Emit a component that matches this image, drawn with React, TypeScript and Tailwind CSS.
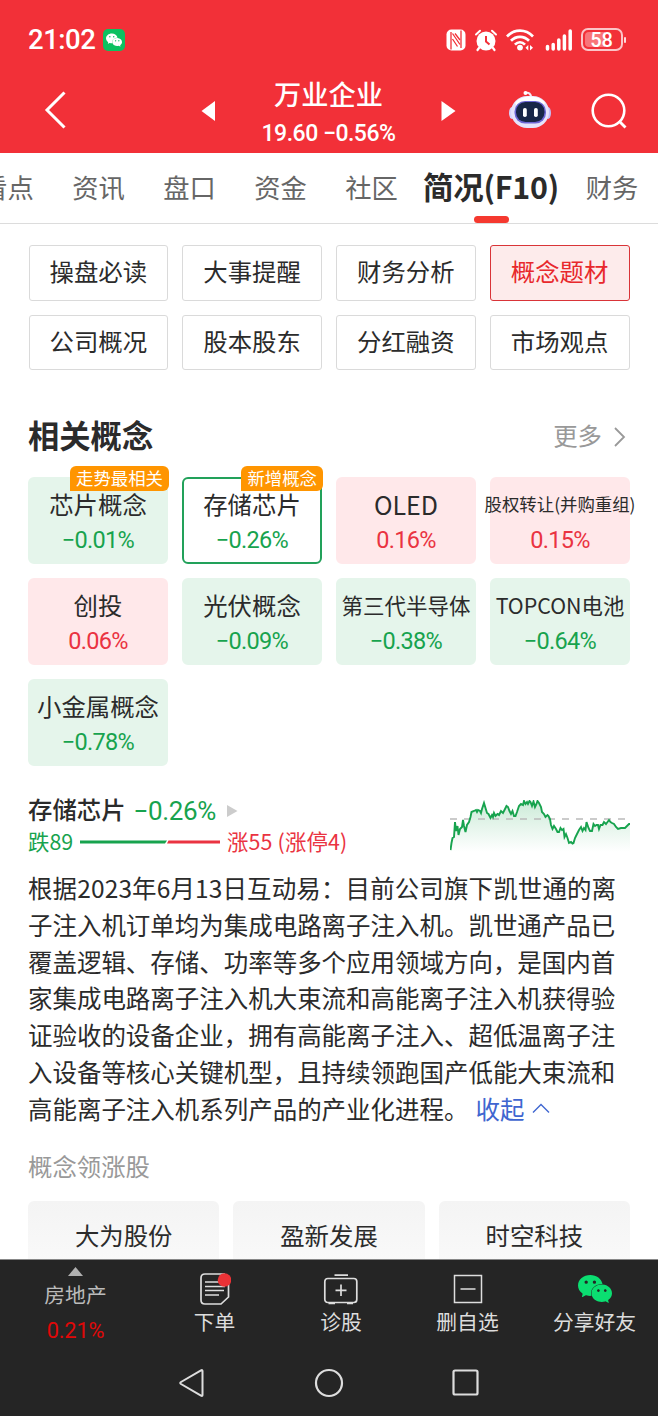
import React from "react";
import { SiWechat } from "react-icons/si";

const tabs = ["看点", "资讯", "盘口", "资金", "社区", "简况(F10)", "财务"];

const sections = [
  "操盘必读", "大事提醒", "财务分析", "概念题材",
  "公司概况", "股本股东", "分红融资", "市场观点",
];

type Concept = { name: string; change: string; up?: boolean; size?: string; badge?: string; selected?: boolean };

const concepts: Concept[] = [
  { name: "芯片概念", change: "−0.01%", badge: "走势最相关" },
  { name: "存储芯片", change: "−0.26%", badge: "新增概念", selected: true },
  { name: "OLED", change: "0.16%", up: true, size: "text-[25px]" },
  { name: "股权转让(并购重组)", change: "0.15%", up: true, size: "text-[17.4px]" },
  { name: "创投", change: "0.06%", up: true },
  { name: "光伏概念", change: "−0.09%" },
  { name: "第三代半导体", change: "−0.38%", size: "text-[21.5px]" },
  { name: "TOPCON电池", change: "−0.64%", size: "text-[21.4px]" },
  { name: "小金属概念", change: "−0.78%" },
];

const firstLine = "根据2023年6月13日互动易：目前公司旗下凯世通的离";

const paragraph = [
  "子注入机订单均为集成电路离子注入机。凯世通产品已",
  "覆盖逻辑、存储、功率等多个应用领域方向，是国内首",
  "家集成电路离子注入机大束流和高能离子注入机获得验",
  "证验收的设备企业，拥有高能离子注入、超低温离子注",
  "入设备等核心关键机型，且持续领跑国产低能大束流和",
];

const linePoints =
  "0.5,50 1.5,43 2.5,38 4,37 5,22 6,31 7.5,26 8.5,35 10,29 12,27 13,20 14,26 15.5,32 17,25 19,22 20.5,17 21.5,12 24,11 26,10 27,12 28,10 30,11 31,13 32,9 34,3 35.5,8 37,13 38.5,14 40.5,18 42,15 43,17 44,13 45.5,16 47.5,14 49,15 51,11 53,13 55,9 56.5,6 58,7 59.5,11 61,14 62.5,11 64,16 65.5,16 67,12 69,6 71,4 73,5 74,1 75.5,4 77,2 78,4 79.5,1 80.5,2 82,6 83.5,1.5 85,7 86.5,4 87.5,1 89,3 91,7 92,12 94,14 95.5,17 97.5,15 98.5,16 100,19 101,25 102.5,29 104,26 106,29 107.5,32 109,32 110.5,28 112,30 113.5,29 114.5,37 116,34 117.5,38 119,43 121,42 122.5,43.5 123.5,43 125,38 127,34 129,30 131,27 132.5,31 134,28 135.5,30 136.5,22 138.5,28 140,31 142,31 143.5,24 145,26 146.5,25 148,25 149,29 150.5,25 152.5,25 154,22 156,24 157.5,22 159,20 160.5,22 162,23 164,24 166,27 168,29 171,28 175,28 177,26 179,24 180,24";

function StatusBar() {
  return (
    <div className="flex h-[76px] items-center pt-[3px] pl-[28px] pr-[32px] text-white">
      <span className="w-[75px] font-['Roboto'] text-[27.5px] font-medium tracking-[-0.5px] whitespace-nowrap">21:02</span>
      <span className="flex h-[22px] w-[22px] items-center justify-center rounded-[5px] bg-[#0cc160]">
        <SiWechat size={16} />
      </span>
      <div className="ml-auto flex items-center">
        <svg width="20" height="22" viewBox="0 0 20 22">
          <rect x="0.5" y="0.5" width="19" height="21" rx="5" fill="#fff" />
          <path d="M5 3V20.500M15 1.500V19" stroke="#f23038" strokeWidth="1.300" fill="none" />
          <path d="M6.500 4.500L14 15.500M6.500 10L11.500 17.500M9 4.500L14 11" stroke="#f23038" strokeWidth="1.300" fill="none" />
        </svg>
        <svg className="ml-[8px]" width="24" height="24" viewBox="0 0 24 24">
          <circle cx="12" cy="13" r="9.5" fill="#fff" />
          <path d="M2 6.5L6 2.8M22 6.5L18 2.8" stroke="#fff" strokeWidth="2" strokeLinecap="round" />
          <path d="M5 20L3.5 22M19 20L20.5 22" stroke="#fff" strokeWidth="2.2" strokeLinecap="round" />
          <path d="M12 8V13.5L15.500 16.500" stroke="#f23038" strokeWidth="2" fill="none" />
        </svg>
        <svg className="ml-[8px]" width="28" height="24" viewBox="0 0 28 24">
          <g fill="none" stroke="#fff" strokeWidth="2.7">
            <path d="M1 8.5C8.5 0.7 19.500 0.7 27 8.5" />
            <path d="M5 12.800C10 7.500 18 7.500 23 12.800" />
            <path d="M8.900 16.600C12 13.600 16 13.600 19 16.600" />
          </g>
          <circle cx="14" cy="19.600" r="2.900" fill="#fff" />
          <path d="M22.300 17V22.500L19.500 19.700ZM24 17V22.500L27 19.700Z" fill="#fff" />
        </svg>
        <svg className="ml-[11px]" width="28" height="22" viewBox="0 0 28 22">
          <path d="M2.500 17.500V20M8.200 15.500V20M13.800 11V20M19.400 7V20M25.200 2V20" stroke="#fff" strokeWidth="3.500" strokeLinecap="round" />
        </svg>
        <div className="ml-[8px] flex h-[23px] w-[42px] items-center rounded-[7px] border-2 border-[#fbc5c8] p-[2px]">
          <div className="flex h-full w-full items-center justify-center rounded-[4px] bg-[linear-gradient(90deg,#f8757a_58%,#f23038_58%)] font-['Roboto'] text-[20px] font-medium leading-none">
            58
          </div>
        </div>
        <span className="ml-[1.500px] h-[6px] w-[2px] rounded-full bg-[#ffd9da]" />
      </div>
    </div>
  );
}

function Robot() {
  return (
    <svg width="44" height="42" viewBox="0 0 44 42">
      <path d="M23 9C23.500 5 20.500 3 17.500 4" stroke="#f5e8f5" strokeWidth="2" fill="none" />
      <circle cx="17.500" cy="4" r="2" fill="#fff" />
      <ellipse cx="4" cy="24" rx="3" ry="6" fill="#d5d3fa" />
      <ellipse cx="40" cy="24" rx="3" ry="6" fill="#c3bff8" />
      <rect x="3" y="7" width="38" height="32" rx="16" fill="#e5e3fb" />
      <path d="M7 14C12 6 31 5 37 14L35 17H9Z" fill="#fff" />
      <rect x="6.500" y="12" width="31.500" height="22.500" rx="10.500" fill="#6c66d4" />
      <rect x="8" y="13" width="28.500" height="20" rx="9.500" fill="#182647" />
      <rect x="15" y="19" width="3.800" height="9" rx="1.800" fill="#fff" />
      <rect x="26" y="19" width="3.800" height="9" rx="1.800" fill="#fff" />
    </svg>
  );
}

function Header() {
  return (
    <header className="h-[153px] bg-[#f23038]">
      <StatusBar />
      <div className="flex h-[77px] items-center text-white">
        <svg className="mt-[-10px] ml-[44px]" width="23" height="38" viewBox="0 0 23 38">
          <path d="M20.500 1.500L3 19L20.500 36.500" stroke="#fff" strokeWidth="3" fill="none" />
        </svg>
        <svg className="ml-[134px] mt-[-7px]" width="15" height="20" viewBox="0 0 15 20">
          <path d="M14 0V20L0.500 10Z" fill="#fff" />
        </svg>
        <div className="flex h-full w-[225px] flex-col items-center">
          <div className="mt-[-2px] h-[38px] text-[27.200px] font-medium leading-[38px]">万业企业</div>
          <div className="mt-[4px] font-['Roboto'] text-[23px] font-medium leading-[36px] tracking-[-0.500px] whitespace-pre">19.60 −0.56%</div>
        </div>
        <svg className="mt-[-7px]" width="15" height="20" viewBox="0 0 15 20">
          <path d="M0.500 0V20L14.500 10Z" fill="#fff" />
        </svg>
        <div className="ml-[52px] mt-[-9px]"><Robot /></div>
        <svg className="ml-[39px] mt-[-8px]" width="37" height="36" viewBox="0 0 37 36">
          <circle cx="17.500" cy="17.500" r="15.800" stroke="#fff" strokeWidth="2.600" fill="none" />
          <path d="M28 28L34.500 34.500" stroke="#fff" strokeWidth="2.800" />
        </svg>
      </div>
    </header>
  );
}

function Tabs() {
  return (
    <nav className="flex h-[71px] items-center overflow-hidden border-b border-[#dcdcdc] whitespace-nowrap text-[#666]">
      {tabs.map((t) =>
        t === "简况(F10)" ? (
          <div key={t} className="relative ml-[-7px] flex h-full w-[162px] shrink-0 items-center justify-center pb-[2px] text-[30.400px] font-bold tracking-[-0.200px] text-[#2b2b2b]">
            {t}
            <span className="absolute bottom-0 left-[64px] h-[7px] w-[35px] rounded-full bg-[#f5392f]" />
          </div>
        ) : (
          <div key={t} className="w-[91px] shrink-0 pb-[2px] text-center text-[26.300px] first:ml-[-38px] last:w-[78px] last:pl-[2px]">{t}</div>
        )
      )}
    </nav>
  );
}

function ConceptCard({ c }: { c: Concept }) {
  const tone = c.selected
    ? "border-2 border-[#22a15a] bg-white"
    : c.up
      ? "border-2 border-[#ffe8ea] bg-[#ffe8ea]"
      : "border-2 border-[#e5f5eb] bg-[#e5f5eb]";
  return (
    <div className={`relative flex h-[87px] flex-col items-center rounded-[6px] whitespace-nowrap ${tone}`}>
      <div className={`mt-[12px] h-[26px] leading-[26px] text-[#2b2b2b] ${c.size ?? "text-[24.400px]"}`}>{c.name}</div>
      <div className={`mt-[5px] font-['Roboto'] text-[23.500px] leading-[36px] tracking-[-0.700px] ${c.up ? "text-[#ea3341]" : "text-[#17a34e]"}`}>
        {c.change}
      </div>
      {c.badge && (
        <span className="absolute top-[-13px] right-[-3px] h-[25px] rounded-[6px] rounded-bl-none bg-[#ff9500] px-[6px] text-[17.400px] leading-[23px] text-white">
          {c.badge}
        </span>
      )}
    </div>
  );
}

function Detail() {
  return (
    <section className="mt-[24px] px-[28px]">
      <div className="flex h-[66px] justify-between">
        <div>
          <div className="flex h-[37px] items-center whitespace-nowrap">
            <span className="mt-px text-[24.400px] font-medium text-[#2b2b2b] leading-[36px]">存储芯片</span>
            <span className="ml-[8px] mt-[5px] w-[93px] font-['Roboto'] text-[26px] leading-[36px] tracking-[-0.400px] text-[#17a34e]">−0.26%</span>
            <svg className="mt-[5px]" width="11" height="12" viewBox="0 0 11 12"><path d="M0 0V12L10.500 6Z" fill="#ccc" /></svg>
          </div>
          <div className="flex h-[27px] items-center text-[21.400px] leading-[26px] whitespace-nowrap">
            <span className="w-[52px] text-[#17a34e]">跌89</span>
            <svg className="mt-[2px]" width="140" height="4" viewBox="0 0 140 4">
              <path d="M0 0.500H87L85 3.500H0Z" fill="#17a34e" />
              <path d="M88.500 0.500H140V3.500H87Z" fill="#ea3341" />
            </svg>
            <span className="ml-[7px] tracking-[0.150px] text-[#ea3341]">涨55 (涨停4)</span>
          </div>
        </div>
        <svg className="mt-[10px]" width="180" height="52" viewBox="0 0 180 52">
          <defs>
            <linearGradient id="area" x1="0" y1="0" x2="0" y2="1">
              <stop offset="0" stopColor="#17a34e" stopOpacity="0.22" />
              <stop offset="1" stopColor="#17a34e" stopOpacity="0" />
            </linearGradient>
          </defs>
          <polygon points={`${linePoints} 180,52 0,52`} fill="url(#area)" />
          <path d="M0 19H180" stroke="#bbb" strokeWidth="1.500" strokeDasharray="7 7" />
          <polyline points={linePoints} fill="none" stroke="#17a34e" strokeWidth="1.900" />
        </svg>
      </div>
      <div className="mt-[14px] text-[24.480px] leading-[36.750px] whitespace-nowrap text-[#2b2b2b]">
        <div className="tracking-[0.140px]">{firstLine}</div>
        {paragraph.map((l) => <div key={l}>{l}</div>)}
        <div className="flex items-center">
          <span>高能离子注入机系列产品的产业化进程。</span>
          <span className="ml-[7px] text-[#3f66d0]">收起</span>
          <svg className="ml-[8px]" width="18" height="11" viewBox="0 0 18 11">
            <path d="M1 9.500L9 1.500L17 9.500" stroke="#3f66d0" strokeWidth="1.400" fill="none" />
          </svg>
        </div>
      </div>
      <div className="mt-[21px] h-[36px] text-[24.400px] leading-[36px] text-[#999]">概念领涨股</div>
      <div className="mt-[17px] grid grid-cols-3 gap-[14px]">
        {["大为股份", "盈新发展", "时空科技"].map((s) => (
          <div key={s} className="h-[100px] rounded-[6px] bg-[linear-gradient(#f4f4f4,#fcfcfc)] pt-[16px] text-center text-[24.400px] leading-[36px] text-[#2b2b2b]">
            {s}
          </div>
        ))}
      </div>
    </section>
  );
}

function BottomItem({ label, width, children }: { label: string; width: string; children: React.ReactNode }) {
  return (
    <div className={`flex flex-col items-center pt-[10px] ${width}`}>
      <div className="flex h-[38px] items-center">{children}</div>
      <div className="mt-[-1px] text-[20.800px] leading-[28px] text-[#ddd]">{label}</div>
    </div>
  );
}

function BottomBar() {
  return (
    <footer className="h-[157px] shrink-0 border-t border-[#888] bg-[#252525] whitespace-nowrap">
      <div className="flex h-[92px]">
        <div className="flex w-[151px] flex-col items-center pt-[7px]">
          <svg width="15" height="9" viewBox="0 0 15 9"><path d="M0 9H15L7.500 0Z" fill="#b0b0b0" /></svg>
          <div className="mt-[3px] text-[20.800px] leading-[30px] text-[#bbb]">房地产</div>
          <div className="mt-[7px] font-['Roboto'] text-[21.800px] leading-[30px] tracking-[-0.200px] text-[#e00808]">0.21%</div>
        </div>
        <BottomItem label="下单" width="w-[127px]">
          <svg width="32" height="34" viewBox="0 0 32 34" fill="none" stroke="#ddd" strokeWidth="1.700">
            <path d="M26 2H6Q2 2 2 6V28Q2 32 6 32H22L29.500 25V8" />
            <path d="M6 10H22M6 14.500H26M6 18.500H25M6 23H20" />
            <circle cx="25.500" cy="8" r="6.800" fill="#ea3236" stroke="none" />
          </svg>
        </BottomItem>
        <BottomItem label="诊股" width="w-[126px]">
          <svg width="36" height="34" viewBox="0 0 36 34" fill="none" stroke="#ddd" strokeWidth="1.700">
            <rect x="1.800" y="6.500" width="32" height="24" rx="3" />
            <path d="M11.500 3.200H25M18 12.500V24M12.500 18.300H23.500M5.500 31.500H12M24 31.500H30" />
          </svg>
        </BottomItem>
        <BottomItem label="删自选" width="w-[127px]">
          <svg width="30" height="30" viewBox="0 0 30 30" fill="none" stroke="#ddd" strokeWidth="1.500">
            <path d="M1.500 1.500H28.500V28.500H1.500ZM7.500 15H22.500" />
          </svg>
        </BottomItem>
        <BottomItem label="分享好友" width="w-[127px]">
          <SiWechat size={34} color="#0bde71" />
        </BottomItem>
      </div>
      <div className="flex h-[61px] items-center">
        <svg className="ml-[178px]" width="27" height="30" viewBox="0 0 27 30">
          <path d="M24.500 3V27Q24.500 28.500 23 27.700L3 16Q1.500 15 3 14L23 2.300Q24.500 1.500 24.500 3Z" stroke="#ddd" strokeWidth="2" fill="none" />
        </svg>
        <svg className="ml-[109px]" width="30" height="30" viewBox="0 0 30 30">
          <circle cx="15" cy="15" r="13" stroke="#ddd" strokeWidth="2.200" fill="none" />
        </svg>
        <svg className="ml-[108px]" width="27" height="27" viewBox="0 0 27 27">
          <rect x="1.500" y="1.500" width="24" height="24" rx="1.500" stroke="#ddd" strokeWidth="2.200" fill="none" />
        </svg>
      </div>
    </footer>
  );
}

export default function App() {
  return (
    <div className="flex h-[1416px] w-[658px] flex-col overflow-hidden bg-white font-['Noto_Sans_CJK_SC',sans-serif]">
      <div className="h-[1259px] overflow-hidden">
        <Header />
        <Tabs />
        <div className="mt-[21px] grid grid-cols-4 gap-[14px] px-[28.500px]">
          {sections.map((s) => (
            <div
              key={s}
              className={`h-[55.500px] rounded-[3px] border text-center text-[24.400px] leading-[50px] ${
                s === "概念题材" ? "border-[#d93438] bg-[#fdebeb] text-[#e8282c]" : "border-[#dadada] text-[#2b2b2b]"
              }`}
            >
              {s}
            </div>
          ))}
        </div>
        <div className="mt-[43px] flex h-[44px] items-center pr-[32px] pl-[28px]">
          <h2 className="text-[31.300px] leading-[44px] font-bold text-[#2b2b2b]">相关概念</h2>
          <span className="ml-auto text-[24.400px] leading-[44px] text-[#999]">更多</span>
          <svg className="mt-[3px] ml-[11px]" width="13" height="20" viewBox="0 0 13 20">
            <path d="M2 1L11 10L2 19" stroke="#999" strokeWidth="1.800" fill="none" />
          </svg>
        </div>
        <div className="mt-[20px] grid grid-cols-4 gap-[14px] px-[28px]">
          {concepts.map((c) => <ConceptCard key={c.name} c={c} />)}
        </div>
        <Detail />
      </div>
      <BottomBar />
    </div>
  );
}
